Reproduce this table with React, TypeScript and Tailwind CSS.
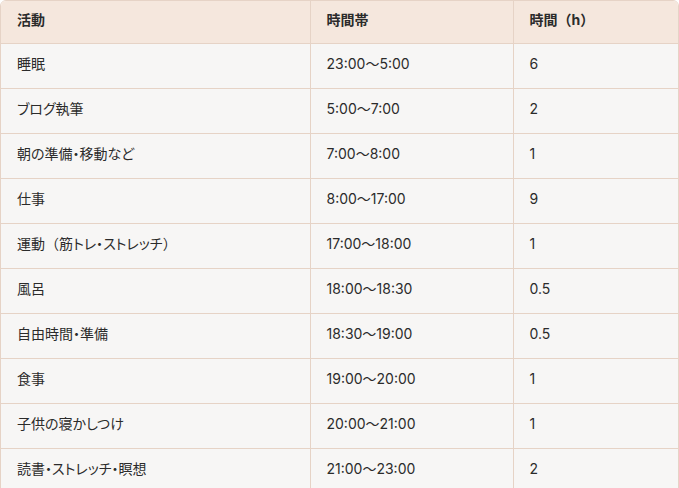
const rows: [string, string, string][] = [
  ['睡眠', '23:00〜5:00', '6'],
  ['ブログ執筆', '5:00〜7:00', '2'],
  ['朝の準備・移動など', '7:00〜8:00', '1'],
  ['仕事', '8:00〜17:00', '9'],
  ['運動（筋トレ・ストレッチ）', '17:00〜18:00', '1'],
  ['風呂', '18:00〜18:30', '0.5'],
  ['自由時間・準備', '18:30〜19:00', '0.5'],
  ['食事', '19:00〜20:00', '1'],
  ['子供の寝かしつけ', '20:00〜21:00', '1'],
  ['読書・ストレッチ・瞑想', '21:00〜23:00', '2'],
];

// full-width brackets keep their full width; kana and dots are set proportionally
function Jp({ text }: { text: string }) {
  const parts = text.split(/([（）])/).filter(Boolean);
  return (
    <>
      {parts.map((p, i) =>
        p === '（' || p === '）' ? (
          <span key={i} className="[font-feature-settings:normal]">
            {p}
          </span>
        ) : (
          <span key={i}>{p}</span>
        ),
      )}
    </>
  );
}

export default function App() {
  return (
    <div
      className="h-[488px] w-[679px] overflow-hidden bg-white text-[14px] text-[#2b2b2b] [font-feature-settings:'palt']"
      style={{ fontFamily: 'Inter, "Noto Sans CJK JP", sans-serif' }}
    >
      <div className="overflow-hidden rounded-md border border-[#e6d3c6]">
        <table className="w-full border-collapse">
          <thead>
            <tr className="h-[42px] bg-[#f5e7dd] text-left">
              <th className="w-[309px] px-4 pb-1 font-bold">
                <Jp text="活動" />
              </th>
              <th className="w-[203px] border-l border-[#e6d3c6] px-4 pb-1 font-bold">
                <Jp text="時間帯" />
              </th>
              <th className="border-l border-[#e6d3c6] px-4 pb-1 font-bold">
                <Jp text="時間（h）" />
              </th>
            </tr>
          </thead>
          <tbody>
            {rows.map(([activity, span, hours]) => (
              <tr key={activity} className="h-[45px] border-t border-[#e6d3c6] bg-[#f7f6f5]">
                <td className="px-4 pb-1">
                  <Jp text={activity} />
                </td>
                <td className="border-l border-[#e6d3c6] px-4 pb-1">{span}</td>
                <td className="border-l border-[#e6d3c6] px-4 pb-1">{hours}</td>
              </tr>
            ))}
          </tbody>
        </table>
      </div>
    </div>
  );
}
